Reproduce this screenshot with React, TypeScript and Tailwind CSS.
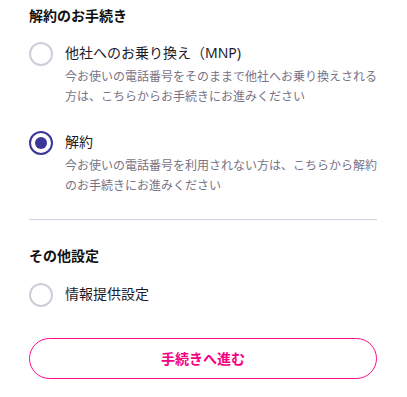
import React, { useState } from "react";

const font = { fontFamily: '"Noto Sans", "Noto Sans CJK JP", sans-serif' };

function Radio({ checked }: { checked: boolean }) {
  return checked ? (
    <span className="mt-[1px] flex h-[24px] w-[24px] shrink-0 items-center justify-center rounded-full border-[2.5px] border-[#3b3698]">
      <span className="h-[12px] w-[12px] rounded-full bg-[#3b3698]" />
    </span>
  ) : (
    <span className="mt-[1px] block h-[24px] w-[24px] shrink-0 rounded-full border-[2px] border-[#cfcdda]" />
  );
}

function Option({
  checked,
  title,
  desc,
  onClick,
}: {
  checked: boolean;
  title: string;
  desc?: string;
  onClick: () => void;
}) {
  return (
    <button type="button" onClick={onClick} className="flex w-full items-start gap-[12px] text-left">
      <Radio checked={checked} />
      <div className="flex-1">
        <div className="text-[14px] leading-[24px] text-[#1c1b2b]">{title}</div>
        {desc && (
          <div className="mt-[2px] text-[12px] leading-[20px] text-[#787386]">{desc}</div>
        )}
      </div>
    </button>
  );
}

export default function App() {
  const [sel, setSel] = useState("cancel");
  const [info, setInfo] = useState(false);
  return (
    <div style={font} className="min-h-[397px] w-[407px] bg-white pl-[29px] pr-[30px] pt-[6px]">
      <h2 className="text-[14px] font-bold leading-[20px] text-[#111]">解約のお手続き</h2>
      <div className="mt-[15px] flex flex-col gap-[23px]">
        <Option
          checked={sel === "mnp"}
          onClick={() => setSel("mnp")}
          title="他社へのお乗り換え（MNP)"
          desc="今お使いの電話番号をそのままで他社へお乗り換えされる方は、こちらからお手続きにお進みください"
        />
        <Option
          checked={sel === "cancel"}
          onClick={() => setSel("cancel")}
          title="解約"
          desc="今お使いの電話番号を利用されない方は、こちらから解約のお手続きにお進みください"
        />
      </div>
      <div className="mt-[23px] h-px bg-[#d3d1df]" />
      <h2 className="mt-[26px] text-[14px] font-bold leading-[20px] text-[#111]">その他設定</h2>
      <div className="mt-[16px]">
        <Option checked={info} onClick={() => setInfo(!info)} title="情報提供設定" />
      </div>
      <button
        type="button"
        className="mt-[31px] flex h-[41px] w-full items-center justify-center rounded-full border-[1.5px] border-[#ff0a8a] text-[14px] font-bold text-[#f5007f]"
      >
        手続きへ進む
      </button>
    </div>
  );
}
